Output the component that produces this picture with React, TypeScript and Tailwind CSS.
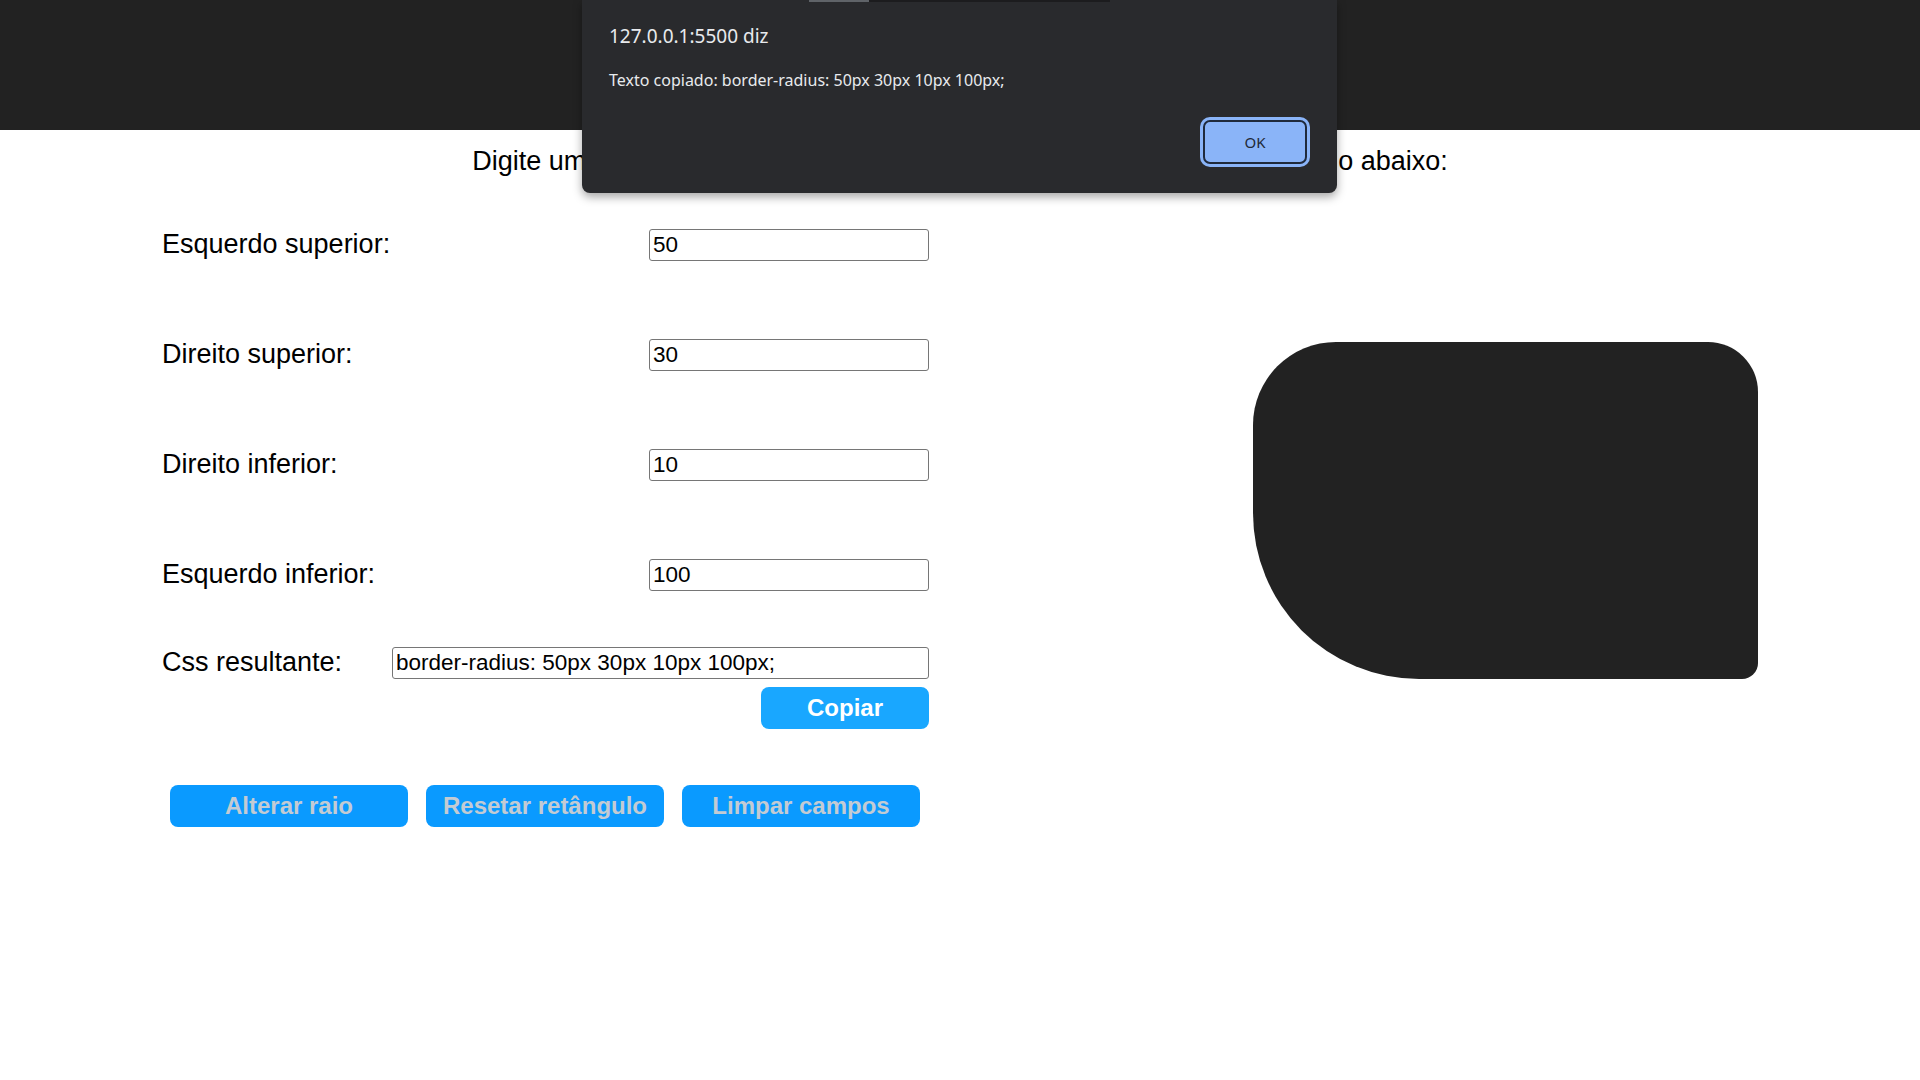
import { useState } from "react";

type Corner = {
    label: string;
    value: string;
};

export default function App() {
    const [corners, setCorners] = useState<Corner[]>([
        { label: "Esquerdo superior:", value: "50" },
        { label: "Direito superior:", value: "30" },
        { label: "Direito inferior:", value: "10" },
        { label: "Esquerdo inferior:", value: "100" },
    ]);

    const css = `border-radius: ${corners.map((c) => c.value + "px").join(" ")};`;

    const setCorner = (i: number, value: string) => {
        setCorners(corners.map((c, idx) => (idx === i ? { ...c, value } : c)));
    };

    return (
        <div className="relative min-h-[1080px] w-full bg-white text-black font-['Liberation_Sans',Arial,sans-serif]">
            <div className="h-[130px] w-full bg-[#222222]"></div>

            <h2 className="pt-[15px] text-center text-[27px] leading-[32px] font-normal">
                Digite um valor em pixels para cada canto e veja o resultado no retângulo abaixo:
            </h2>

            <div className="flex flex-row pt-[52px]">
                {/* formulario */}
                <div className="flex w-[929px] flex-col pl-[162px]">
                    <div className="flex flex-col gap-[78px]">
                        {corners.map((corner, i) => (
                            <div key={corner.label} className="flex h-[32px] items-center justify-between">
                                <label className="-mt-[2px] text-[27px] leading-[32px]">{corner.label}</label>
                                <input
                                    type="text"
                                    value={corner.value}
                                    onChange={(e) => setCorner(i, e.target.value)}
                                    className="h-[32px] w-[280px] rounded-[3px] border border-[#767676] px-[3px] text-[22.5px] outline-none"
                                />
                            </div>
                        ))}
                    </div>

                    <div className="mt-[56px] flex h-[32px] items-center justify-between">
                        <label className="-mt-[2px] text-[27px] leading-[32px]">Css resultante:</label>
                        <input
                            type="text"
                            readOnly
                            value={css}
                            className="h-[32px] w-[537px] rounded-[3px] border border-[#767676] px-[3px] text-[22.5px] outline-none"
                        />
                    </div>

                    <button className="mt-[8px] h-[42px] w-[168px] self-end rounded-[8px] bg-[#19a7ff] text-[24px] font-bold text-white">
                        Copiar
                    </button>

                    <div className="mt-[56px] flex gap-[18px] pl-[8px]">
                        <button className="h-[42px] w-[238px] rounded-[8px] bg-[#0a9aff] text-[24px] font-bold text-[#c3cbd3]">
                            Alterar raio
                        </button>
                        <button className="h-[42px] w-[238px] rounded-[8px] bg-[#0a9aff] text-[24px] font-bold text-[#c3cbd3]">
                            Resetar retângulo
                        </button>
                        <button className="h-[42px] w-[238px] rounded-[8px] bg-[#0a9aff] text-[24px] font-bold text-[#c3cbd3]">
                            Limpar campos
                        </button>
                    </div>
                </div>

                {/* retangulo */}
                <div className="ml-[324px] mt-[113px] h-[337px] w-[505px] rounded-[83px_50px_16px_166px] bg-[#222222]"></div>
            </div>

            {/* alerta do navegador */}
            <div className="absolute left-[582px] top-0 flex h-[193px] w-[755px] flex-col rounded-b-[8px] bg-[#292a2d] px-[27px] pt-[23px] font-['Noto_Sans','Open_Sans',sans-serif] shadow-[0_4px_10px_rgba(0,0,0,0.35)]">
                <div className="absolute left-[227px] top-0 h-[2px] w-[60px] bg-[#5f6368]"></div>
                <div className="absolute left-[287px] top-0 h-[2px] w-[241px] bg-[#1c1c1e]"></div>
                <p className="text-[19px] leading-[26px] text-[#e8eaed]">127.0.0.1:5500 diz</p>
                <p className="mt-[21px] text-[16px] leading-[20px] text-[#e8eaed]">{"Texto copiado: " + css}</p>
                <div className="mt-auto mb-[26px] flex justify-end">
                    <div className="rounded-[10px] bg-[#8ab4f8] p-[3px]">
                        <button className="flex h-[44px] w-[104px] items-center justify-center rounded-[7px] border-2 border-[#1f2a3c] bg-[#8ab4f8] text-[15px] text-[#1f2937]">
                            OK
                        </button>
                    </div>
                </div>
            </div>
        </div>
    );
}
